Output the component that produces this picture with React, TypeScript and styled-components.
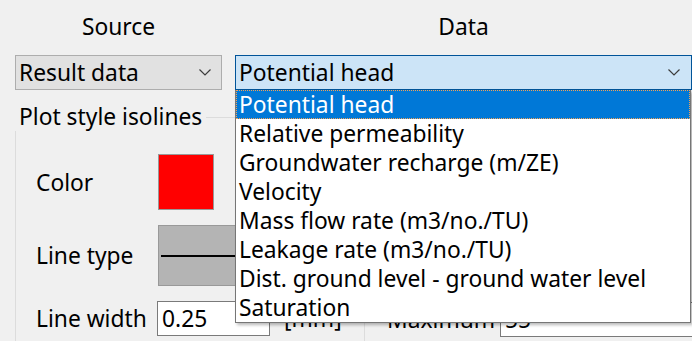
import styled, { createGlobalStyle } from 'styled-components';

const GlobalStyle = createGlobalStyle`
  html, body {
    margin: 0;
    padding: 0;
    background: #f0f0f0;
  }
  body {
    font-family: "Noto Sans", "DejaVu Sans", sans-serif;
    font-size: 22.8px;
    color: #000;
  }
`;

const Window = styled.div`
  position: relative;
  width: 692px;
  height: 341px;
  overflow: hidden;
  background: #f0f0f0;
  display: flex;
  flex-direction: column;
`;

const TopGrid = styled.div`
  display: grid;
  grid-template-columns: 207px 457px;
  column-gap: 13px;
  padding-left: 15px;
`;

const Heading = styled.div`
  padding-top: 12px;
  height: 29px;
  line-height: 29px;
  margin-bottom: 14px;
  text-align: center;
`;

const ComboWrap = styled.div`
  position: relative;
`;

const Combo = styled.div<{ $active?: boolean }>`
  box-sizing: border-box;
  height: 35px;
  display: flex;
  align-items: center;
  justify-content: space-between;
  padding: 0 ${p => (p.$active ? 11 : 10)}px 0 3px;
  border: 1px solid ${p => (p.$active ? '#005499' : '#adadad')};
  background: ${p => (p.$active ? '#cce4f7' : '#e1e1e1')};
  line-height: 29px;
  white-space: nowrap;
`;

const DropList = styled.div`
  position: absolute;
  top: 100%;
  left: 0;
  width: 456px;
  box-sizing: border-box;
  background: #fff;
  border: 1px solid #767676;
  border-top: none;
  box-shadow: 2px 2px 3px rgba(0, 0, 0, 0.28);
  z-index: 10;
`;

const Option = styled.div<{ $selected?: boolean }>`
  height: 29px;
  line-height: 29px;
  padding-left: 3px;
  white-space: nowrap;
  background: ${p => (p.$selected ? '#0078d7' : 'transparent')};
  color: ${p => (p.$selected ? '#fff' : '#000')};
  outline: ${p => (p.$selected ? '1px dotted #f3a257' : 'none')};
  outline-offset: -1px;
`;

const Body = styled.div`
  flex: 1;
  display: flex;
  margin-top: 27px;
  padding-left: 15px;
`;

const GroupBox = styled.div`
  box-sizing: border-box;
  flex: 0 0 350px;
  border: 1px solid #dcdcdc;
  border-bottom: none;
`;

const Legend = styled.div`
  width: fit-content;
  margin: -16px 0 0 -1px;
  padding: 0 4px;
  height: 29px;
  line-height: 29px;
  background: #f0f0f0;
  white-space: nowrap;
`;

const FieldGrid = styled.div`
  display: grid;
  grid-template-columns: 122px auto;
  row-gap: 15px;
  align-items: center;
  padding: 23px 0 0 20px;
`;

const Label = styled.div`
  line-height: 29px;
  white-space: nowrap;
`;

const Swatch = styled.div<{ $color: string }>`
  box-sizing: border-box;
  width: 56px;
  height: 56px;
  border: 1px solid #999;
  background: ${p => p.$color};
`;

const LineSample = styled.div`
  box-sizing: border-box;
  width: 180px;
  height: 61px;
  padding: 0 2px;
  display: flex;
  align-items: center;
  border: 1px solid #999;
  background: #b4b4b4;
`;

const Stroke = styled.div`
  flex: 1;
  height: 2px;
  background: #000;
`;

const InputRow = styled.div`
  display: flex;
  align-items: center;
  gap: 14px;
  margin-left: -1px;
`;

const TextBox = styled.input<{ $width: number }>`
  box-sizing: border-box;
  flex: 0 0 ${p => p.$width}px;
  width: ${p => p.$width}px;
  height: 35px;
  margin: 0;
  padding: 0 4px;
  border: 1px solid #7a7a7a;
  background: #fff;
  font: inherit;
  color: #000;
  outline: none;
`;

const SidePanel = styled.div`
  flex: 1;
  min-width: 0;
  display: flex;
  flex-direction: column;
  justify-content: flex-end;
  padding: 0 0 4px 22px;
`;

const SideRow = styled.div`
  display: flex;
  align-items: center;
`;

const SideLabel = styled(Label)`
  flex: 0 0 113px;
`;

const Chevron = () => (
  <svg width="12" height="7" viewBox="0 0 12 7">
    <polyline points="0.5,0.5 6,6 11.5,0.5" fill="none" stroke="#3c3c3c" strokeWidth="1.2" />
  </svg>
);

const options = [
  'Potential head',
  'Relative permeability',
  'Groundwater recharge (m/ZE)',
  'Velocity',
  'Mass flow rate (m3/no./TU)',
  'Leakage rate (m3/no./TU)',
  'Dist. ground level - ground water level',
  'Saturation',
];

export default function App() {
  return (
    <>
      <GlobalStyle />
      <Window>
        <TopGrid>
          <div>
            <Heading>Source</Heading>
            <Combo>
              <span>Result data</span>
              <Chevron />
            </Combo>
          </div>
          <div>
            <Heading>Data</Heading>
            <ComboWrap>
              <Combo $active>
                <span>Potential head</span>
                <Chevron />
              </Combo>
              <DropList>
                {options.map((o, i) => (
                  <Option key={o} $selected={i === 0}>
                    {o}
                  </Option>
                ))}
              </DropList>
            </ComboWrap>
          </div>
        </TopGrid>
        <Body>
          <GroupBox>
            <Legend>Plot style isolines</Legend>
            <FieldGrid>
              <Label>Color</Label>
              <Swatch $color="#ff0000" />
              <Label>Line type</Label>
              <LineSample>
                <Stroke />
              </LineSample>
              <Label>Line width</Label>
              <InputRow>
                <TextBox $width={113} defaultValue="0.25" readOnly />
                <Label>[mm]</Label>
              </InputRow>
            </FieldGrid>
          </GroupBox>
          <SidePanel>
            <SideRow>
              <SideLabel>Maximum</SideLabel>
              <TextBox $width={200} defaultValue="55" readOnly />
            </SideRow>
          </SidePanel>
        </Body>
      </Window>
    </>
  );
}
